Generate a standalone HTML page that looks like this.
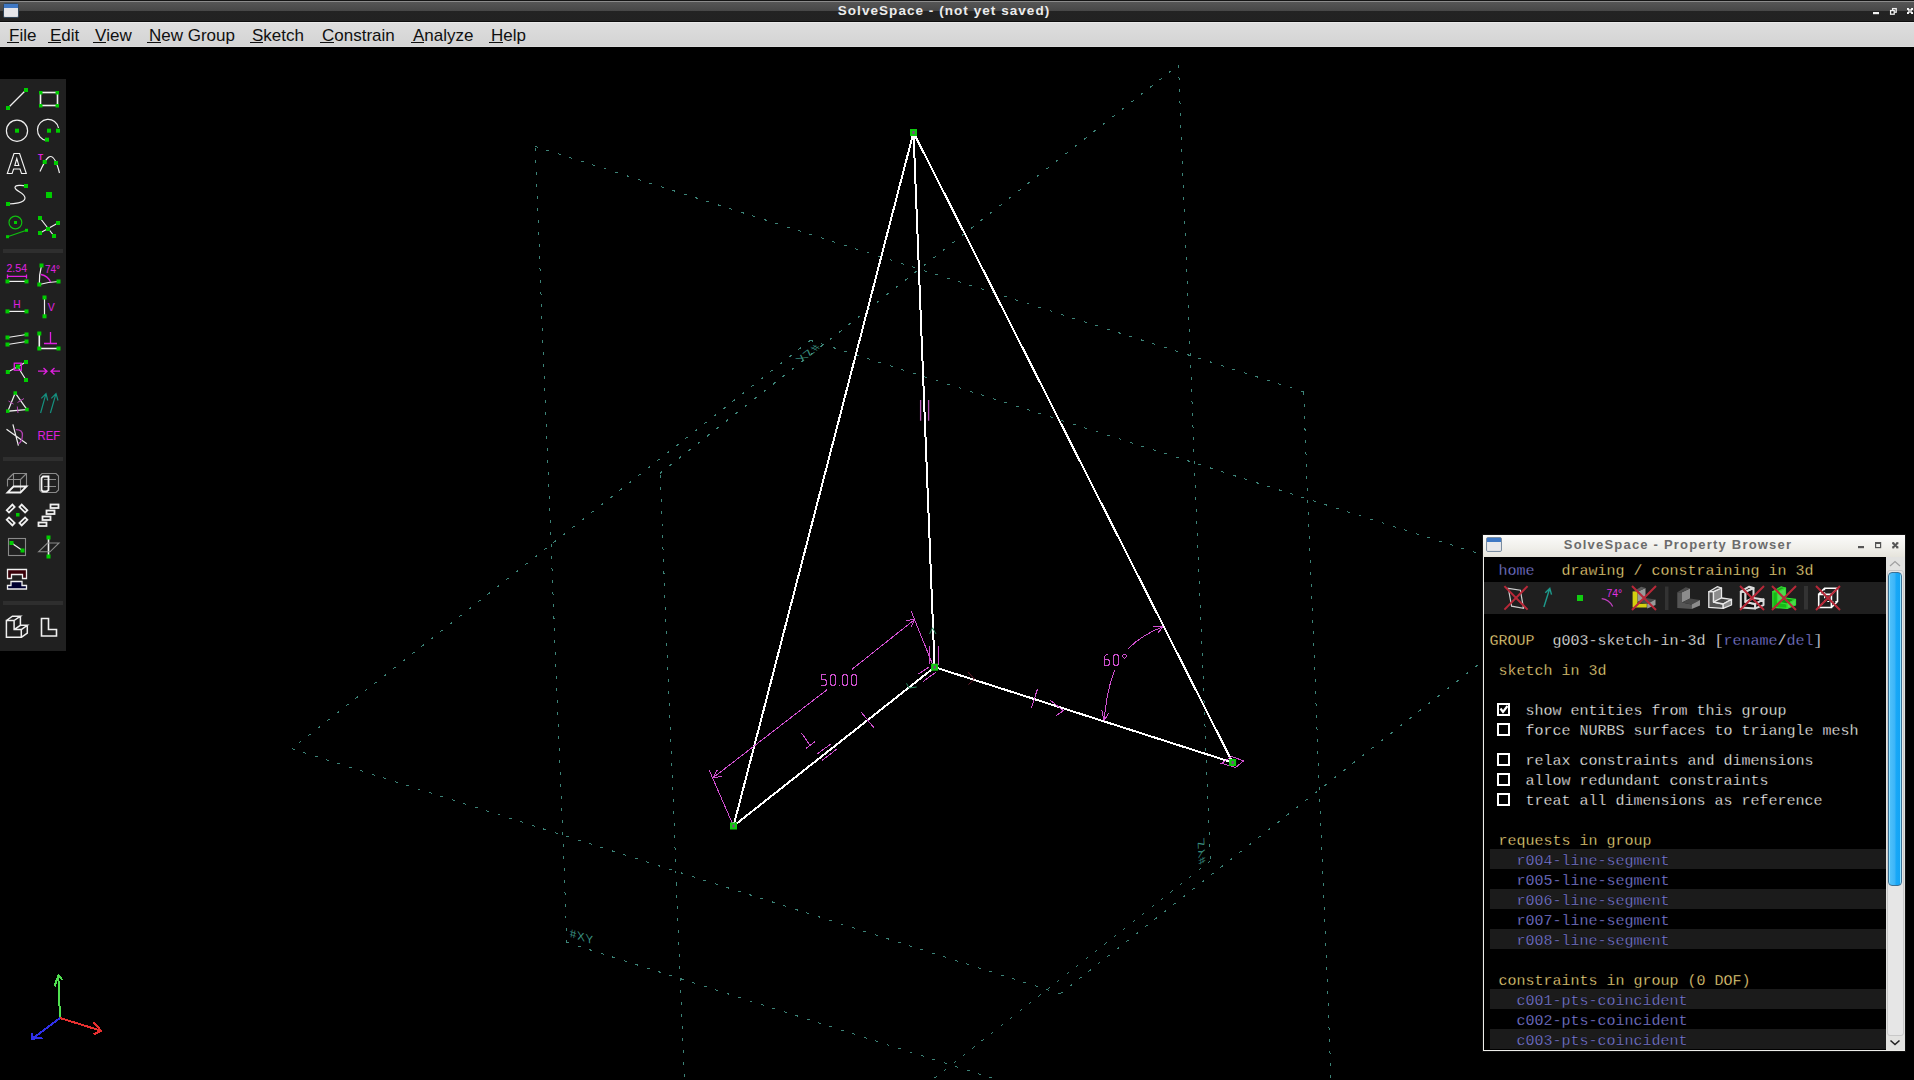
<!DOCTYPE html>
<html><head><meta charset="utf-8">
<style>
html,body{margin:0;padding:0;background:#000;width:1914px;height:1080px;overflow:hidden;position:relative;font-family:"Liberation Sans",sans-serif;}
.abs{position:absolute;}
#title{left:0;top:0;width:1914px;height:22px;background:linear-gradient(#141414 0,#141414 1px,#8c8c8c 1px,#8c8c8c 2px,#565656 2px,#474747 11px,#232323 11px,#222 21px,#0c0c0c 21px);}
#title .t{position:absolute;left:0;width:1888px;top:3px;text-align:center;color:#ececec;font-weight:bold;font-size:13.5px;letter-spacing:1.05px;line-height:16px;white-space:nowrap;}
#menubar{left:0;top:22px;width:1914px;height:25px;background:linear-gradient(#e9e9e9 0,#e9e9e9 1px,#dddddd 1px,#d4d4d4 24px,#dadada 24px);}
.mi{position:absolute;top:4px;font-size:17px;line-height:20px;color:#101010;white-space:nowrap;}
.mi u{text-decoration:none;position:relative;}
.mi u:after{content:"";position:absolute;left:-2px;right:0px;top:16px;height:1px;background:#101010;}
.pbtt{text-align:center;color:#6b6b6b;font-weight:bold;font-size:13px;letter-spacing:1.2px;line-height:16px;white-space:nowrap;}
.ln{position:absolute;font-family:"Liberation Mono",monospace;font-size:15px;line-height:20px;white-space:pre;-webkit-text-stroke:0.3px #000;}
.y{color:#f6dc80}.w{color:#fafafa}.l{color:#8282e0}
</style></head><body>
<div id="title" class="abs"><div class="t">SolveSpace - (not yet saved)</div>
<svg class="abs" style="left:3px;top:3px" width="17" height="16"><rect x="0.5" y="0.5" width="15" height="14" rx="1.5" fill="#d6d6d8" stroke="#33475a"/><rect x="1" y="1" width="14" height="4" fill="#3f78c4"/><rect x="1.2" y="5" width="13.6" height="8.5" fill="#e6e6ea"/></svg>
<svg class="abs" style="left:1866px;top:4px" width="48" height="14"><rect x="7" y="8" width="6" height="2.2" fill="#f4f4f4"/><rect x="26.6" y="4.6" width="3.6" height="3.6" fill="none" stroke="#f0f0f0" stroke-width="1.3"/><rect x="24.6" y="6.6" width="3.6" height="3.6" fill="#111" stroke="#f0f0f0" stroke-width="1.3"/><path d="M41.8 4.8 L46.2 9.2 M46.2 4.8 L41.8 9.2" stroke="#f4f4f4" stroke-width="1.8"/><rect x="41" y="4" width="1.8" height="1.8" fill="#fff"/><rect x="45.2" y="4" width="1.8" height="1.8" fill="#fff"/><rect x="41" y="8.2" width="1.8" height="1.8" fill="#fff"/><rect x="45.2" y="8.2" width="1.8" height="1.8" fill="#fff"/><rect x="43" y="6" width="2" height="2" fill="#bbb"/></svg>
</div>
<div id="menubar" class="abs">
<span class="mi" style="left:9px"><u>F</u>ile</span>
<span class="mi" style="left:50px"><u>E</u>dit</span>
<span class="mi" style="left:95px"><u>V</u>iew</span>
<span class="mi" style="left:149px"><u>N</u>ew Group</span>
<span class="mi" style="left:252px"><u>S</u>ketch</span>
<span class="mi" style="left:322px"><u>C</u>onstrain</span>
<span class="mi" style="left:413px"><u>A</u>nalyze</span>
<span class="mi" style="left:491px"><u>H</u>elp</span>
</div>
<svg class="abs" style="left:0;top:47px" width="1914" height="1033" viewBox="0 47 1914 1033">
<path d="M535.1 146.5 L1303.5 391.7 M1303.5 391.7 L1335.4 1187.6 M1335.4 1187.6 L567.0 942.5 M567.0 942.5 L535.1 146.5 M660.0 473.3 L1178.5 65.0 M1178.5 65.0 L1210.4 860.9 M1210.4 860.9 L691.9 1269.2 M691.9 1269.2 L660.0 473.3 M291.8 748.7 L1060.2 993.8 M1060.2 993.8 L1578.7 585.5 M1578.7 585.5 L810.3 340.3 M810.3 340.3 L291.8 748.7" fill="none" stroke="#3c8478" stroke-width="1" stroke-dasharray="3 9" shape-rendering="crispEdges"/>
<g fill="none" stroke="#3a9a8c" stroke-width="1">
</g>
<text x="0" y="0" font-family="Liberation Sans" font-size="12" letter-spacing="1" fill="#3a9080" transform="matrix(0.9527 0.3039 0.0400 0.9992 569.94 937.02)">#XY</text>
<text x="0" y="0" font-family="Liberation Sans" font-size="12" letter-spacing="1" fill="#3a9080" transform="matrix(-0.0400 -0.9992 0.7856 -0.6187 1205.19 861.52)">#YZ</text>
<text x="0" y="0" font-family="Liberation Sans" font-size="12" letter-spacing="1" fill="#3a9080" transform="matrix(-0.7856 0.6187 -0.9527 -0.3039 813.79 344.42)">#ZX</text>
<path d="M913.5 132.5 L934.6 667.2 M913.5 132.5 L733.5 826.0 M913.5 132.5 L1232.6 762.5 M934.6 667.2 L733.5 826.0 M934.6 667.2 L1232.6 762.5" fill="none" stroke="#fff" stroke-width="2" shape-rendering="crispEdges"/>
<path d="M733.5 826 L709.3 770.4 M932.4 663.9 L911.1 611.1 M713 777.8 L826.9 689.8 M851.9 669.4 L914.8 619.4 M713 777.8 L721.8 776.5 M713 777.8 L717.2 770.2 M914.8 619.4 L906 620.5 M914.8 619.4 L910.8 627.3 M801.5 733 L810.5 746 M806 748.5 L815 741.5 M817.6 753.7 L831.5 743.5 M822.2 760.2 L837 749 M861 712 L874 727.8 M1037.4 689.3 L1031.4 707.8 M1050.4 700.4 L1063.3 710.6 L1056.4 715.6 M918.5 674 L929.6 666.7 M923 681.5 L936 672.2 M929.6 646 L929.9 664.4 M938.1 646.2 L938.4 664.7 M1221.5 763.3 L1231.5 756.5 L1243.7 760.9 L1235.6 767.4 Z M1104.2 720.8 Q1107 688 1115 670 M1127.5 649.2 Q1143 634 1163.3 626.7 M1104.2 720.8 L1101.7 710 M1104.2 720.8 L1108.3 713.3 M1163.3 626.7 L1153.3 626.3 M1163.3 626.7 L1157.5 633.3" fill="none" stroke="#d050d0" stroke-width="1" shape-rendering="crispEdges"/>
<path d="M920.6 400 V420.8 M928.6 400 V420.8" stroke="#b858b8" stroke-width="1.3"/>
<path d="M968 672 L974.4 679 L968.4 684.6" fill="none" stroke="#6a2030" stroke-width="1"/>
<path d="M929.6 634 L932.5 627.8 L936 634 M906.5 683.3 L909 688 L916.7 687" fill="none" stroke="#2a8a60" stroke-width="1"/>
<g fill="none" stroke="#cc50cc" stroke-width="1" shape-rendering="crispEdges"><path d="M5.5 0.5 L0.5 0.5 L0.5 5.5 L4.5 5.5 L5.5 6.5 L5.5 10.5 L4.5 11.5 L0.5 12" transform="translate(820.5 674.0)"/><path d="M1.5 0.5 L4.5 0.5 L5.5 2.5 L5.5 9.5 L4.5 11.5 L1.5 11.5 L0.5 9.5 L0.5 2.5 Z" transform="translate(830.0 674.0)"/><path d="M2 11.5 L3 11.5" transform="translate(837.0 674.0)"/><path d="M1.5 0.5 L4.5 0.5 L5.5 2.5 L5.5 9.5 L4.5 11.5 L1.5 11.5 L0.5 9.5 L0.5 2.5 Z" transform="translate(842.0 674.0)"/><path d="M1.5 0.5 L4.5 0.5 L5.5 2.5 L5.5 9.5 L4.5 11.5 L1.5 11.5 L0.5 9.5 L0.5 2.5 Z" transform="translate(851.0 674.0)"/><path d="M4.5 0.5 L3.5 0.5 L1.5 2 L0.5 3.5 L0.5 10.5 L1.5 11.5 L4.5 11.5 L5.5 10.5 L5.5 6.5 L4.5 5.5 L0.5 5.5" transform="translate(1103.5 654.0)"/><path d="M1.5 0.5 L4.5 0.5 L5.5 2.5 L5.5 9.5 L4.5 11.5 L1.5 11.5 L0.5 9.5 L0.5 2.5 Z" transform="translate(1113.0 654.0)"/><path d="M1.5 0.5 H3.5 L4.5 1.5 V2.5 L2.5 4.5 L0.5 2.5 V1.5 Z" transform="translate(1122.0 654.0)"/></g>
<rect x="910.0" y="129.0" width="7" height="7" fill="#10c810"/><rect x="912.5" y="131.0" width="2" height="3" fill="#8a3a8a"/>
<rect x="931.1" y="663.7" width="7" height="7" fill="#10c810"/><rect x="933.6" y="665.7" width="2" height="3" fill="#8a3a8a"/>
<rect x="730.0" y="822.5" width="7" height="7" fill="#10c810"/><rect x="732.5" y="824.5" width="2" height="3" fill="#8a3a8a"/>
<rect x="1229.1" y="759.0" width="7" height="7" fill="#10c810"/><rect x="1231.6" y="761.0" width="2" height="3" fill="#8a3a8a"/>
<g fill="none" stroke-width="2" shape-rendering="crispEdges">
<path d="M60 1018 L58.3 975.4 M54.6 986.3 L58.3 975.4 L62.5 980" stroke="#50e050"/>
<path d="M60 1018 L101.3 1030.8 M93.3 1022.5 L101.3 1030.8 L93.8 1034.2" stroke="#e83030"/>
<path d="M60 1018 L32.1 1038.8 M32 1033 L32.1 1038.8 L42.5 1037.9" stroke="#3030e8"/>
</g>
</svg>
<svg class="abs" style="left:0;top:0" width="66" height="660" viewBox="0 0 66 660">
<rect x="0" y="79" width="66" height="572" fill="#202020"/>
<g fill="#2e2e2e"><rect x="3" y="249" width="60" height="4"/><rect x="3" y="457" width="60" height="4"/><rect x="3" y="601" width="60" height="4"/></g>
<g stroke="#f0f0f0" fill="none" stroke-width="1.2">
<!-- line -->
<line x1="8" y1="108" x2="26" y2="90"/>
<!-- rect -->
<rect x="40.5" y="92.5" width="17" height="13" stroke-width="1.6"/>
<!-- circle -->
<circle cx="17" cy="130.7" r="10.6"/>
<!-- arc -->
<path d="M58.5 128 A10.6 10.6 0 1 0 46.5 140.5"/>
<!-- tangent arc -->
<path d="M40 171.5 C44 163 47 156.5 50.5 156.5 C54 156.5 57 163 59.5 173"/>
<!-- bezier -->
<path d="M8 204 C13 204 25 203 25 198 C25 193 15 191 15 187.5 C15 185 22 185 26 186"/>
<!-- split -->
<path d="M40 218 L54 236 M40 233 L58 223"/>
<!-- distance -->
<line x1="7.5" y1="281.4" x2="26.5" y2="281.4"/>
<!-- angle -->
<path d="M41.5 265.5 Q39 275 39.3 284.5 Q48 282 58.5 281.5"/>
<!-- H -->
<line x1="7.5" y1="311.4" x2="26.5" y2="311.4"/>
<!-- V -->
<line x1="44.5" y1="297.5" x2="44.5" y2="316.3"/>
<!-- parallel -->
<path d="M7.5 337.5 L26.5 334.5 M7.5 344.5 L26.5 341.5"/>
<!-- perp -->
<path d="M39.3 333.5 V348.5 H58.5" stroke-width="1.6"/>
<!-- on point -->
<path d="M7.8 372 L17.8 366.7 L26 362 M17.8 366.7 L26 380"/>
<!-- equal triangle -->
<path d="M15.2 393 L7.8 411.2 L27 409.6 Z" stroke-width="1.2"/>
<!-- symmetric -->
<path d="M6.5 429.3 L26.8 443.8 M12.9 424.4 L18.4 445.6"/>
<!-- step translate -->
<rect x="50.5" y="504.5" width="8" height="3.5" stroke-width="1.8"/>
<rect x="46.5" y="510.5" width="8" height="3.5" stroke-width="1.8"/>
<rect x="42.5" y="516.5" width="8" height="3.5" stroke-width="1.8"/>
<rect x="38.5" y="522.5" width="8" height="3.5" stroke-width="1.8"/>
<!-- step rotate -->
<g stroke-width="1.8"><rect x="-4" y="-1.6" width="8" height="3.2" transform="translate(10.7 508.6) rotate(-45)"/>
<rect x="-4" y="-1.6" width="8" height="3.2" transform="translate(23.4 508.6) rotate(45)"/>
<rect x="-4" y="-1.6" width="8" height="3.2" transform="translate(10.7 521.4) rotate(45)"/>
<rect x="-4" y="-1.6" width="8" height="3.2" transform="translate(23.4 521.4) rotate(-45)"/></g>
<!-- workplane -->
<line x1="11.5" y1="543" x2="22.5" y2="550.5"/>
<line x1="48.5" y1="537.5" x2="48.5" y2="556.5" stroke-width="1.6"/>
<!-- assembly -->
<path d="M7.5 569.5 H26.5 V578.5 H22.5 V574.5 H11.5 V578.5 H7.5 Z" fill="#3a0008" stroke-width="1.3"/>
<path d="M11 581.5 H22 V585.5 H26.5 V589 H7.5 V585.5 H11 Z" fill="#000030" stroke-width="1.3"/>
<!-- 3d -->
<path d="M6.4 620.5 H14.1 V629.6 H21.3 V637.3 H6.4 Z M6.4 620.5 L12.4 616.2 H20.4 L14.1 620.5 M20.4 616.2 V625.3 M14.1 629.6 L20.4 625.3 H27.3 L21.3 629.6 M27.3 625.3 V633 L21.3 637.3" stroke-width="1.5"/>
<!-- 2d L -->
<path d="M41.5 618.5 H48.5 V629.5 H56.5 V636 H41.5 Z" stroke-width="1.6"/>
</g>
<g stroke="#8a8a8a" fill="none" stroke-width="1.1">
<!-- extrude cube -->
<path d="M7.5 486.5 V479.5 H20.5 V492.5 M13.5 486.5 V473.5 H26.5 V486.5 M7.5 479.5 L13.5 473.5 M20.5 479.5 L26.5 473.5"/>
<!-- lathe -->
<path d="M42 473.5 H56 L58.5 476 V490 L56 492.5 H42 L39.5 490 V476 Z M44 479.5 H56 M44 486.5 H56"/>
<!-- workplane sq -->
<rect x="8.5" y="538.5" width="17" height="17"/>
<path d="M38.5 551.8 L47.5 543 H59 L50 551.8 Z"/>
</g>
<g stroke="#f4f4f4" fill="none" stroke-width="1.8">
<path d="M7.5 492.5 H20.5 L26.5 486.5 H13.5 Z"/>
<path d="M48.5 476.5 V490 L46.5 491.5 H43 L41.5 490 V478 L43 476.5 H46 Z"/>
</g>
<!-- Text A outline -->
<path d="M14 153.5 H19.6 L26.3 173.5 H21.5 L20 169 H13.6 L12.1 173.5 H7.3 Z M16.8 158.5 L14.8 165.5 H18.8 Z" fill="none" stroke="#f4f4f4" stroke-width="1.1"/>
<g stroke="#10c010" fill="none" stroke-width="1.2">
<circle cx="15.4" cy="222.5" r="6.4"/>
<line x1="7.5" y1="236.7" x2="26.5" y2="230.3"/>
</g>
<g stroke="#e020e0" fill="none" stroke-width="1.3">
<path d="M7.5 274.5 V278.5 M7.5 276.4 H26.5 M26.5 274.5 V278.5"/>
<path d="M41 274.5 Q48 276 50.5 282"/>
<path d="M50.5 332 V343.5 M44 343.5 H57"/>
<rect x="14.3" y="363.2" width="7" height="7" transform="rotate(0)"/>
<path d="M38 371.2 H47 M43.5 368 L47 371.2 L43.5 374.4 M60 371.2 H51 M54.5 368 L51 371.2 L54.5 374.4"/>
<path d="M8.5 401 L13.5 404 M17.5 402.5 L24 398.5 M17.3 406.5 L18 413" stroke="#b848b8" stroke-width="1"/>
<path d="M15.8 429.6 Q22.8 429.5 22.4 435.5 Q22 442 18.6 443.6" stroke="#b040b0"/>
</g>
<g stroke="#15907f" fill="none" stroke-width="1.2">
<path d="M40.6 413 L46 393.6 M41.3 398.4 L46 393.6 L47.7 400.5 M50.4 413 L56 393.6 M51.3 398.4 L56 393.6 L58 400.5"/>
</g>
<g fill="#e020e0" font-family="Liberation Sans, sans-serif">
<text x="6.5" y="272.3" font-size="10.5" textLength="20.5" lengthAdjust="spacingAndGlyphs">2.54</text>
<text x="45" y="273.2" font-size="10" textLength="15" lengthAdjust="spacingAndGlyphs">74°</text>
<text x="13.3" y="308" font-size="10.2">H</text>
<text x="47.8" y="310.8" font-size="10.4">V</text>
<text x="37.6" y="440.2" font-size="13.5" textLength="22.7" lengthAdjust="spacingAndGlyphs">REF</text>
<text x="38" y="160" font-size="8.2" font-weight="bold">T</text>
</g>
<g fill="#00cc00">
<rect x="6" y="106" width="4" height="4"/><rect x="24" y="88" width="4" height="4"/>
<rect x="39" y="91" width="3.5" height="3.5"/><rect x="55.5" y="91" width="3.5" height="3.5"/><rect x="39" y="104" width="3.5" height="3.5"/><rect x="55.5" y="104" width="3.5" height="3.5"/>
<rect x="15" y="128.7" width="4" height="4"/>
<rect x="47" y="128.7" width="4" height="4"/><rect x="56" y="128.7" width="4" height="4"/><rect x="45" y="137.7" width="4" height="4"/>
<rect x="42.7" y="160" width="4" height="4"/><rect x="54" y="161" width="4" height="4"/>
<rect x="6" y="202" width="4" height="4"/><rect x="24" y="184" width="4" height="4"/>
<rect x="46" y="192" width="6" height="6"/>
<rect x="14" y="221" width="3" height="3"/><rect x="6" y="235.2" width="3" height="3"/><rect x="25" y="228.8" width="3" height="3"/>
<rect x="46" y="227" width="4" height="4"/><rect x="38" y="216" width="4" height="4"/><rect x="56" y="221" width="4" height="4"/><rect x="38" y="231" width="4" height="4"/><rect x="52" y="234" width="4" height="4"/>
<rect x="5.5" y="279.4" width="4" height="4"/><rect x="24.5" y="279.4" width="4" height="4"/>
<rect x="37.3" y="282.5" width="4" height="4"/><rect x="39.5" y="263.5" width="4" height="4"/><rect x="56.5" y="279.5" width="4" height="4"/>
<rect x="5.5" y="309.4" width="4" height="4"/><rect x="24.5" y="309.4" width="4" height="4"/>
<rect x="42.5" y="295.5" width="4" height="4"/><rect x="42.5" y="314.3" width="4" height="4"/>
<rect x="5.5" y="335.5" width="4" height="4"/><rect x="24.5" y="332.5" width="4" height="4"/><rect x="5.5" y="342.5" width="4" height="4"/><rect x="24.5" y="339.5" width="4" height="4"/>
<rect x="37.3" y="331.5" width="4" height="4"/><rect x="37.3" y="346.5" width="4" height="4"/><rect x="56.5" y="346.5" width="4" height="4"/>
<rect x="15.8" y="364.7" width="4" height="4"/><rect x="5.8" y="370" width="4" height="4"/><rect x="24" y="360" width="4" height="4"/><rect x="24" y="378" width="4" height="4"/>
<rect x="13.5" y="391.3" width="3.5" height="3.5"/><rect x="6" y="409.4" width="3.5" height="3.5"/><rect x="25.2" y="407.8" width="3.5" height="3.5"/>
<rect x="16" y="513" width="3.5" height="3.5"/>
<rect x="9.5" y="541" width="4" height="4"/><rect x="20.5" y="548.5" width="4" height="4"/>
<rect x="46.5" y="535.5" width="4" height="4"/><rect x="46.5" y="554.5" width="4" height="4"/>
</g>
</svg>

<div class="abs" style="left:1482px;top:534px;width:424px;height:518px;background:#101010"></div>
<div class="abs" style="left:1483px;top:535px;width:422px;height:516px;background:#eeeeea"></div>
<div class="abs" style="left:1483px;top:535px;width:422px;height:22px;background:linear-gradient(#fbfbfa,#f0efea 60%,#e6e4dc)"></div>
<div class="abs" style="left:1484px;top:557px;width:402px;height:493px;background:#000"></div>
<svg class="abs" style="left:1486px;top:537px" width="17" height="16"><rect x="0.5" y="0.5" width="15" height="14" rx="1.5" fill="#d6d6d8" stroke="#7b8ea2"/><rect x="1" y="1" width="14" height="4" fill="#3f78c4"/><rect x="1.2" y="5" width="13.6" height="8.5" fill="#e9e9ec"/></svg>
<div class="abs pbtt" style="left:1483px;top:537px;width:390px;">SolveSpace - Property Browser</div>
<svg class="abs" style="left:1850px;top:538px" width="56" height="14"><rect x="8" y="8" width="6" height="2.2" fill="#555"/><rect x="25.6" y="4.6" width="5" height="5" fill="none" stroke="#555" stroke-width="1.2"/><rect x="25" y="4" width="6" height="2" fill="#555"/><path d="M43 5 L47.5 9.5 M47.5 5 L43 9.5" stroke="#555" stroke-width="1.8"/><rect x="42.2" y="4.2" width="2" height="2" fill="#555"/><rect x="46.4" y="4.2" width="2" height="2" fill="#555"/><rect x="42.2" y="8.4" width="2" height="2" fill="#555"/><rect x="46.4" y="8.4" width="2" height="2" fill="#555"/></svg>
<div class="abs" style="left:1886px;top:557px;width:19px;height:493px;background:#e2e2e0"></div>
<div class="abs" style="left:1887px;top:570px;width:15px;height:464px;border:1px solid #c8c8c8;border-radius:3px;background:#e6e6e6"></div>
<div class="abs" style="left:1888px;top:572px;width:12px;height:312px;border:1px solid #3b6f93;border-radius:4px;background:linear-gradient(90deg,#8ee0ff 0,#8ee0ff 1px,#4ec0fa 1px,#3bb4f8 6px,#18a8f8 7px,#14a4f4 11px,#8ee0ff 11px)"></div>
<svg class="abs" style="left:1886px;top:557px" width="19" height="493"><path d="M4 9 L9 4.5 L14 9" fill="none" stroke="#a0a0a0" stroke-width="1.2"/><path d="M4.5 483.5 L9 487.5 L13.5 483.5" fill="none" stroke="#222" stroke-width="1.6"/></svg>
<div class="abs" style="left:1484px;top:582px;width:402px;height:32px;background:#1f1f1f"></div>
<svg class="abs" style="left:0;top:0;overflow:visible" width="1" height="1"><path d="M1508.3 588.3 L1520.4 590.2 L1523.5 608.3 L1511.6 606.2 Z" fill="none" stroke="#cfcfcf" stroke-width="1.2"/><path d="M1504.4 586.1 L1527.6 609.6 M1504.4 609.6 L1527.6 586.1" stroke="#b82838" stroke-width="2"/><path d="M1543.9 607 L1549.8 588.3 M1545.3 592.8 L1549.8 588.3 L1551.5 594.6" fill="none" stroke="#1e9a8c" stroke-width="1.4"/><rect x="1577" y="595" width="6" height="6" fill="#10cc10"/><text x="1606.5" y="597" font-family="Liberation Sans" font-size="10" fill="#e030e0" textLength="15.8" lengthAdjust="spacingAndGlyphs">74°</text><path d="M1601.7 598.7 Q1609 599.5 1612.7 606.5" fill="none" stroke="#c040c0" stroke-width="1.3"/><path d="M1637.5 591.7 L1645.5 588.0 L1645.5 598.0 L1637.5 602.0 Z" fill="#9a9a9a"/><path d="M1637.5 602.0 L1645.5 598.0 L1655.5 599.4 L1647.2 604.0 Z" fill="#4a4a4a"/><path d="M1647.2 604.0 L1655.5 599.4 L1655.5 605.0 L1647.2 608.4 Z" fill="#9a9a9a"/><path d="M1632.8 591.7 L1641.2 586.7 L1645.5 588.0 L1637.5 591.7 Z" fill="#5a5a5a"/><path d="M1632.6 591.6 H1637.4 V603.7 H1646.8 V607.6 H1632.6 Z" fill="#d4d010"/><path d="M1632.0 586.0 L1656.0 610.0 M1632.0 610.0 L1656.0 586.0" stroke="#b82838" stroke-width="2"/><rect x="1665" y="586.5" width="3.5" height="23.5" fill="#333"/><rect x="1804" y="586" width="4" height="23.5" fill="#333"/><path d="M1677.3 592.2 L1682.0 592.2 L1682.0 602.5 L1691.7 604.5 L1691.7 608.9 L1677.3 607.9 Z" fill="#555"/><path d="M1682.0 592.2 L1690.0 588.5 L1690.0 598.5 L1682.0 602.5 Z" fill="#8c8c8c"/><path d="M1682.0 602.5 L1690.0 598.5 L1700.0 599.9 L1691.7 604.5 Z" fill="#484848"/><path d="M1691.7 604.5 L1700.0 599.9 L1700.0 605.5 L1691.7 608.9 Z" fill="#8c8c8c"/><path d="M1677.3 592.2 L1685.7 587.2 L1690.0 588.5 L1682.0 592.2 Z" fill="#4c4c4c"/><path d="M1708.8 591.7 L1713.5 591.7 L1713.5 602.0 L1723.2 604.0 L1723.2 608.4 L1708.8 607.4 Z" fill="#555" stroke="#e8e8e8" stroke-width="1.3" stroke-linejoin="round"/><path d="M1713.5 591.7 L1721.5 588.0 L1721.5 598.0 L1713.5 602.0 Z" fill="#8c8c8c" stroke="#e8e8e8" stroke-width="1.3" stroke-linejoin="round"/><path d="M1713.5 602.0 L1721.5 598.0 L1731.5 599.4 L1723.2 604.0 Z" fill="#484848" stroke="#e8e8e8" stroke-width="1.3" stroke-linejoin="round"/><path d="M1723.2 604.0 L1731.5 599.4 L1731.5 605.0 L1723.2 608.4 Z" fill="#8c8c8c" stroke="#e8e8e8" stroke-width="1.3" stroke-linejoin="round"/><path d="M1708.8 591.7 L1717.2 586.7 L1721.5 588.0 L1713.5 591.7 Z" fill="#4c4c4c" stroke="#e8e8e8" stroke-width="1.3" stroke-linejoin="round"/><path d="M1740.8 591.7 L1745.5 591.7 L1745.5 602.0 L1755.2 604.0 L1755.2 608.4 L1740.8 607.4 Z" fill="#101010" stroke="#dcdcdc" stroke-width="2.0" stroke-linejoin="round"/><path d="M1745.5 591.7 L1753.5 588.0 L1753.5 598.0 L1745.5 602.0 Z" fill="#101010" stroke="#dcdcdc" stroke-width="2.0" stroke-linejoin="round"/><path d="M1745.5 602.0 L1753.5 598.0 L1763.5 599.4 L1755.2 604.0 Z" fill="#101010" stroke="#dcdcdc" stroke-width="2.0" stroke-linejoin="round"/><path d="M1755.2 604.0 L1763.5 599.4 L1763.5 605.0 L1755.2 608.4 Z" fill="#101010" stroke="#dcdcdc" stroke-width="2.0" stroke-linejoin="round"/><path d="M1740.8 591.7 L1749.2 586.7 L1753.5 588.0 L1745.5 591.7 Z" fill="#101010" stroke="#dcdcdc" stroke-width="2.0" stroke-linejoin="round"/><path d="M1740.0 586.0 L1764.0 610.0 M1740.0 610.0 L1764.0 586.0" stroke="#b82838" stroke-width="2"/><path d="M1772.8 591.7 L1777.5 591.7 L1777.5 602.0 L1787.2 604.0 L1787.2 608.4 L1772.8 607.4 Z" fill="#18b818" stroke="#30e030" stroke-width="1.2" stroke-linejoin="round"/><path d="M1777.5 591.7 L1785.5 588.0 L1785.5 598.0 L1777.5 602.0 Z" fill="#50d850" stroke="#30e030" stroke-width="1.2" stroke-linejoin="round"/><path d="M1777.5 602.0 L1785.5 598.0 L1795.5 599.4 L1787.2 604.0 Z" fill="#109010" stroke="#30e030" stroke-width="1.2" stroke-linejoin="round"/><path d="M1787.2 604.0 L1795.5 599.4 L1795.5 605.0 L1787.2 608.4 Z" fill="#50d850" stroke="#30e030" stroke-width="1.2" stroke-linejoin="round"/><path d="M1772.8 591.7 L1781.2 586.7 L1785.5 588.0 L1777.5 591.7 Z" fill="#20a020" stroke="#30e030" stroke-width="1.2" stroke-linejoin="round"/><path d="M1772.0 586.0 L1796.0 610.0 M1772.0 610.0 L1796.0 586.0" stroke="#b82838" stroke-width="2"/><path d="M1818.7 594.4 H1831.4 V607.5 H1818.7 Z M1818.7 594.4 L1824.6 588.2 H1837.5 V601.5 L1831.4 607.5 M1831.4 594.4 L1837.5 588.2" fill="none" stroke="#fff" stroke-width="1.6"/><path d="M1824.6 588.2 V601.5 H1837.5 M1818.7 607.5 L1824.6 601.5" fill="none" stroke="#fff" stroke-width="1.2" stroke-dasharray="2 2"/><path d="M1816.0 586.0 L1840.0 610.0 M1816.0 610.0 L1840.0 586.0" stroke="#b82838" stroke-width="2"/></svg>
<div class="abs" style="left:1490px;top:849px;width:396px;height:20px;background:#1b1b1b"></div>
<div class="abs" style="left:1490px;top:889px;width:396px;height:20px;background:#1b1b1b"></div>
<div class="abs" style="left:1490px;top:929px;width:396px;height:20px;background:#1b1b1b"></div>
<div class="abs" style="left:1490px;top:989px;width:396px;height:20px;background:#1b1b1b"></div>
<div class="abs" style="left:1490px;top:1029px;width:396px;height:20px;background:#1b1b1b"></div>
<div class="ln" style="left:1498.5px;top:562px"><span class="l">home</span><span class="w">   </span><span class="y">drawing / constraining in 3d</span></div>

<div class="ln" style="left:1489.5px;top:632px"><span class="y">GROUP</span><span class="w">  g003-sketch-in-3d [</span><span class="l">rename</span><span class="w">/</span><span class="l">del</span><span class="w">]</span></div>

<div class="ln" style="left:1498.5px;top:662px"><span class="y">sketch in 3d</span></div>

<div class="ln" style="left:1525.5px;top:702px"><span class="w">show entities from this group</span></div>

<div class="ln" style="left:1525.5px;top:722px"><span class="w">force NURBS surfaces to triangle mesh</span></div>

<div class="ln" style="left:1525.5px;top:752px"><span class="w">relax constraints and dimensions</span></div>

<div class="ln" style="left:1525.5px;top:772px"><span class="w">allow redundant constraints</span></div>

<div class="ln" style="left:1525.5px;top:792px"><span class="w">treat all dimensions as reference</span></div>

<div class="ln" style="left:1498.5px;top:832px"><span class="y">requests in group</span></div>

<div class="ln" style="left:1516.5px;top:852px"><span class="l">r004-line-segment</span></div>

<div class="ln" style="left:1516.5px;top:872px"><span class="l">r005-line-segment</span></div>

<div class="ln" style="left:1516.5px;top:892px"><span class="l">r006-line-segment</span></div>

<div class="ln" style="left:1516.5px;top:912px"><span class="l">r007-line-segment</span></div>

<div class="ln" style="left:1516.5px;top:932px"><span class="l">r008-line-segment</span></div>

<div class="ln" style="left:1498.5px;top:972px"><span class="y">constraints in group (0 DOF)</span></div>

<div class="ln" style="left:1516.5px;top:992px"><span class="l">c001-pts-coincident</span></div>

<div class="ln" style="left:1516.5px;top:1012px"><span class="l">c002-pts-coincident</span></div>

<div class="ln" style="left:1516.5px;top:1032px"><span class="l">c003-pts-coincident</span></div>

<svg class="abs" style="left:0;top:0;overflow:visible" width="1" height="1"><rect x="1498" y="704" width="11" height="11" fill="none" stroke="#fff" stroke-width="2"/><path d="M1500.5 708.5 L1503 712.0 L1507.5 706.0" fill="none" stroke="#fff" stroke-width="2.2"/><rect x="1498" y="724" width="11" height="11" fill="none" stroke="#fff" stroke-width="2"/><rect x="1498" y="754" width="11" height="11" fill="none" stroke="#fff" stroke-width="2"/><rect x="1498" y="774" width="11" height="11" fill="none" stroke="#fff" stroke-width="2"/><rect x="1498" y="794" width="11" height="11" fill="none" stroke="#fff" stroke-width="2"/></svg>
</body></html>
